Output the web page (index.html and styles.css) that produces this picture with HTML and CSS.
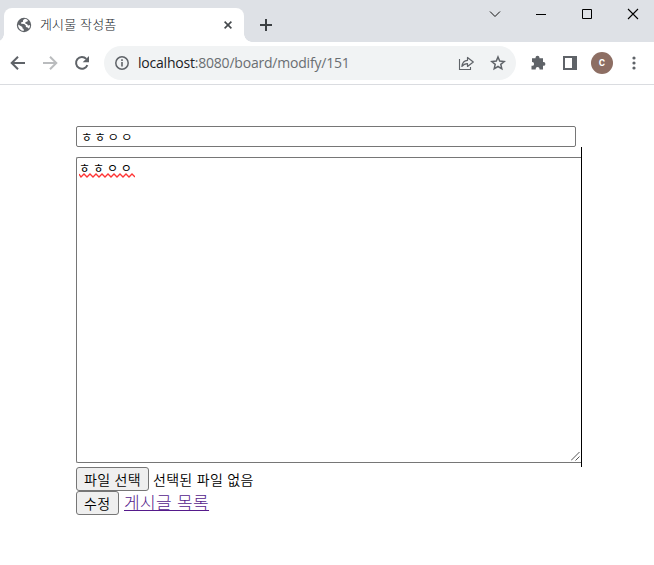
FILE: index.html
```html
<!DOCTYPE html>
<html lang="ko">
<head>
<meta charset="utf-8">
<title>게시물 작성폼</title>
<link rel="stylesheet" href="styles.css">
</head>
<body>
<header class="tabstrip">
  <div class="tab">
    <svg class="globe" width="16" height="16" viewBox="0 0 16 16"><circle cx="8" cy="8" r="7.2" fill="#5f6368"/><path d="M9 1.8 7.1 3.1 7 4.8 5 5.5l.2 1.3 3 .2 1.6 1.5.1 1.5 1.7.5 1.4 1.2A6 6 0 0 0 14 8c-1.500.8-2.500.4-2.700-.8L9.300 6.600l.2-1.500 1.900-.5.5-1.300A6 6 0 0 0 9 1.800zM2.100 7.600l4.300 2.300v1.300l1.300.8v2A6 6 0 0 1 2.100 7.600z" fill="#fff"/></svg>
    <span class="tab-title">게시물 작성폼</span>
    <svg class="tab-close" width="8" height="8" viewBox="0 0 8 8"><path d="M.6.6l6.800 6.800M7.400.6L.6 7.400" stroke="#45494d" stroke-width="1.600"/></svg>
  </div>
  <svg class="new-tab" width="12" height="12" viewBox="0 0 12 12"><path d="M6 0v12M0 6h12" stroke="#3c4043" stroke-width="2"/></svg>
  <div class="window-buttons">
    <svg width="46" height="28" viewBox="0 0 46 28"><path d="M18 11.500l5 5 5-5" fill="none" stroke="#111"/></svg>
    <svg width="46" height="28" viewBox="0 0 46 28"><path d="M18 14.500h10" stroke="#000"/></svg>
    <svg width="46" height="28" viewBox="0 0 46 28"><path d="M18.500 9.500h9v9h-9z" fill="none" stroke="#000"/></svg>
    <svg width="46" height="28" viewBox="0 0 46 28"><path d="M18 9l10 10M28 9L18 19" stroke="#000" stroke-width="1.100"/></svg>
  </div>
</header>
<nav class="toolbar">
  <svg class="nav-icon" width="16" height="16" viewBox="0 0 16 16"><path d="M15 8H2.500M8 1.700L1.700 8 8 14.300" fill="none" stroke="#5f6368" stroke-width="2"/></svg>
  <svg class="nav-icon" width="16" height="16" viewBox="0 0 16 16"><path d="M1 8h12.500M8 1.700L14.300 8 8 14.300" fill="none" stroke="#babcbe" stroke-width="2"/></svg>
  <svg class="nav-icon" width="16" height="16" viewBox="0 0 16 16"><path d="M13.400 10.200A5.900 5.900 0 1 1 12.300 3.900" fill="none" stroke="#5f6368" stroke-width="2"/><path d="M15 1v6.300H8.700z" fill="#5f6368"/></svg>
  <div class="omnibox">
    <svg width="16" height="16" viewBox="0 0 16 16"><circle cx="8" cy="8" r="6.200" fill="none" stroke="#5f6368" stroke-width="1.500"/><path d="M8 7v4.500M8 4.300v1.600" stroke="#5f6368" stroke-width="1.600"/></svg>
    <span class="url"><b>localhost</b>:8080/board/modify/151</span>
    <svg class="share" width="16" height="16" viewBox="0 0 16 16"><path d="M1.500 4v10.500h11V12" fill="none" stroke="#5f6368" stroke-width="1.100"/><path d="M9.500 2.500v2.800C6.300 5.500 4.300 7.800 3.900 11.500c1.500-2 3.200-2.800 5.600-2.800v2.800L15.300 7z" fill="none" stroke="#5f6368" stroke-width="1.200" stroke-linejoin="round"/></svg>
    <svg class="star" width="16" height="16" viewBox="0 0 16 16"><path d="M8 2l1.700 4.100 4.500.4-3.400 2.900 1 4.400L8 11.500l-3.800 2.300 1-4.400-3.400-2.900 4.500-.4z" fill="none" stroke="#5f6368" stroke-width="1.500"/></svg>
  </div>
  <svg class="puzzle" width="16" height="16" viewBox="0 0 16 16"><path d="M2 3.300h3.500V2.800a2 2 0 0 1 4 0v.5H13V7h.5a1.900 1.900 0 0 1 0 3.800H13v3.700H9.500v-.7a1.900 1.900 0 0 0-3.800 0v.7H1.500v-3.700h.7a1.900 1.900 0 0 0 0-3.800H2z" fill="#5f6368"/></svg>
  <svg class="panel" width="14" height="14" viewBox="0 0 14 14"><path d="M0 0h14v14H0zM2 2v10h7V2z" fill="#5f6368" fill-rule="evenodd"/></svg>
  <span class="avatar">c</span>
  <svg class="menu" width="4" height="14" viewBox="0 0 4 14"><g fill="#5f6368"><circle cx="2" cy="2" r="1.600"/><circle cx="2" cy="7" r="1.600"/><circle cx="2" cy="12" r="1.600"/></g></svg>
</nav>
<main class="form">
  <div class="title-field">ㅎㅎㅇㅇ</div>
  <div class="editor">
    <div class="content-field">
      <div class="content-text">ㅎㅎㅇㅇ</div>
      <svg class="squiggle" width="56" height="5" viewBox="0 0 56 5"><path d="M0 1l2 3 3-3 3 3 3-3 3 3 3-3 3 3 3-3 3 3 3-3 3 3 3-3 3 3 3-3 3 3 3-3 3 3 3-3 3 3" fill="none" stroke="#ff3434" stroke-width="1.300"/></svg>
      <svg class="grip" width="9" height="9" viewBox="0 0 9 9"><path d="M0 8.500L8.500 0M4.500 8.500L8.500 4.500" stroke="#555" stroke-width="1"/></svg>
    </div>
  </div>
  <div class="row"><span class="button file-button">파일 선택</span><span class="file-name">선택된 파일 없음</span></div>
  <div class="row"><span class="button submit">수정</span><a class="list-link" href="#">게시글 목록</a></div>
</main>
</body>
</html>
```
FILE: styles.css
```css
* { box-sizing: border-box; }
body { margin: 0; height: 565px; overflow: hidden; background: #fff; color: #000; font-family: "Noto Sans CJK KR", sans-serif; }
svg { display: block; flex: none; }
.tabstrip { display: flex; height: 42px; background: #dee1e6; }
.tab { position: relative; display: flex; align-items: center; width: 240px; height: 34px; margin: 8px 0 0 4px; padding: 0 12px; border-radius: 8px 8px 0 0; background: #fff; }
.tab::before, .tab::after { content: ""; position: absolute; bottom: 0; width: 8px; height: 8px; }
.tab::before { left: -8px; background: radial-gradient(circle at 0 0, transparent 7.5px, #fff 8px); }
.tab::after { right: -8px; background: radial-gradient(circle at 100% 0, transparent 7.5px, #fff 8px); }
.tab-title { margin: -2px 0 0 8px; font-size: 13px; line-height: 16px; letter-spacing: .15px; color: #202428; white-space: nowrap; font-weight: 300; }
.tab-close { margin-left: auto; }
.new-tab { margin: 19px 0 0 16px; }
.window-buttons { display: flex; margin-left: auto; margin-right: -2px; }
.toolbar { display: flex; align-items: center; height: 43px; padding-left: 10px; border-bottom: 1px solid #dadce0; }
.nav-icon { margin-right: 16px; }
.omnibox { display: flex; align-items: center; width: 412px; height: 34px; margin-left: -2px; padding: 0 10px; border-radius: 17px; background: #f1f3f4; }
.url { margin-left: 8px; font: 14px/20px "Open Sans", sans-serif; letter-spacing: -.21px; color: #6a6e72; white-space: nowrap; }
.url b { font-weight: 400; color: #202124; }
.share { margin-left: auto; }
.star { margin-left: 16px; }
.puzzle { margin-left: 14px; }
.panel { margin-left: 17px; }
.avatar { width: 22px; height: 22px; margin-left: 14px; border-radius: 50%; background: #8d6e63; color: #fff; font: 500 12px/21px Roboto, sans-serif; text-align: center; }
.menu { margin-left: 19px; }
.form { padding: 41px 0 0 76px; }
.title-field { width: 500px; height: 21px; padding-left: 4px; border: 1px solid #767676; border-radius: 2px; font-size: 12.5px; line-height: 20px; letter-spacing: 1.8px; font-weight: 350; white-space: nowrap; }
.editor { width: 506px; height: 320px; padding-top: 10px; border-right: 1px solid #000; }
.content-field { position: relative; height: 306px; padding: 1px 2px; border: 1px solid #767676; border-right: 0; border-radius: 2px 0 0 2px; }
.content-text { font-size: 12px; line-height: 17px; letter-spacing: 2.9px; }
.squiggle { position: absolute; left: 2px; top: 15px; }
.grip { position: absolute; right: 1px; bottom: 1px; }
.row { display: flex; align-items: center; height: 24px; }
.button { height: 24px; border: 1px solid #767676; border-radius: 3px; background: #efefef; font-size: 14px; line-height: 23px; letter-spacing: .3px; padding-left: 7px; font-weight: 350; white-space: nowrap; }
.file-button { width: 73px; }
.file-name { margin-left: 4px; font-size: 14px; line-height: 22px; letter-spacing: .3px; font-weight: 350; white-space: nowrap; }
.submit { width: 43px; }
.list-link { margin: -2px 0 0 5px; font-size: 17px; line-height: 24px; letter-spacing: .35px; font-weight: 300; color: #551a8b; text-underline-offset: 1px; text-decoration-thickness: 1px; text-decoration-skip-ink: none; white-space: nowrap; }
```
